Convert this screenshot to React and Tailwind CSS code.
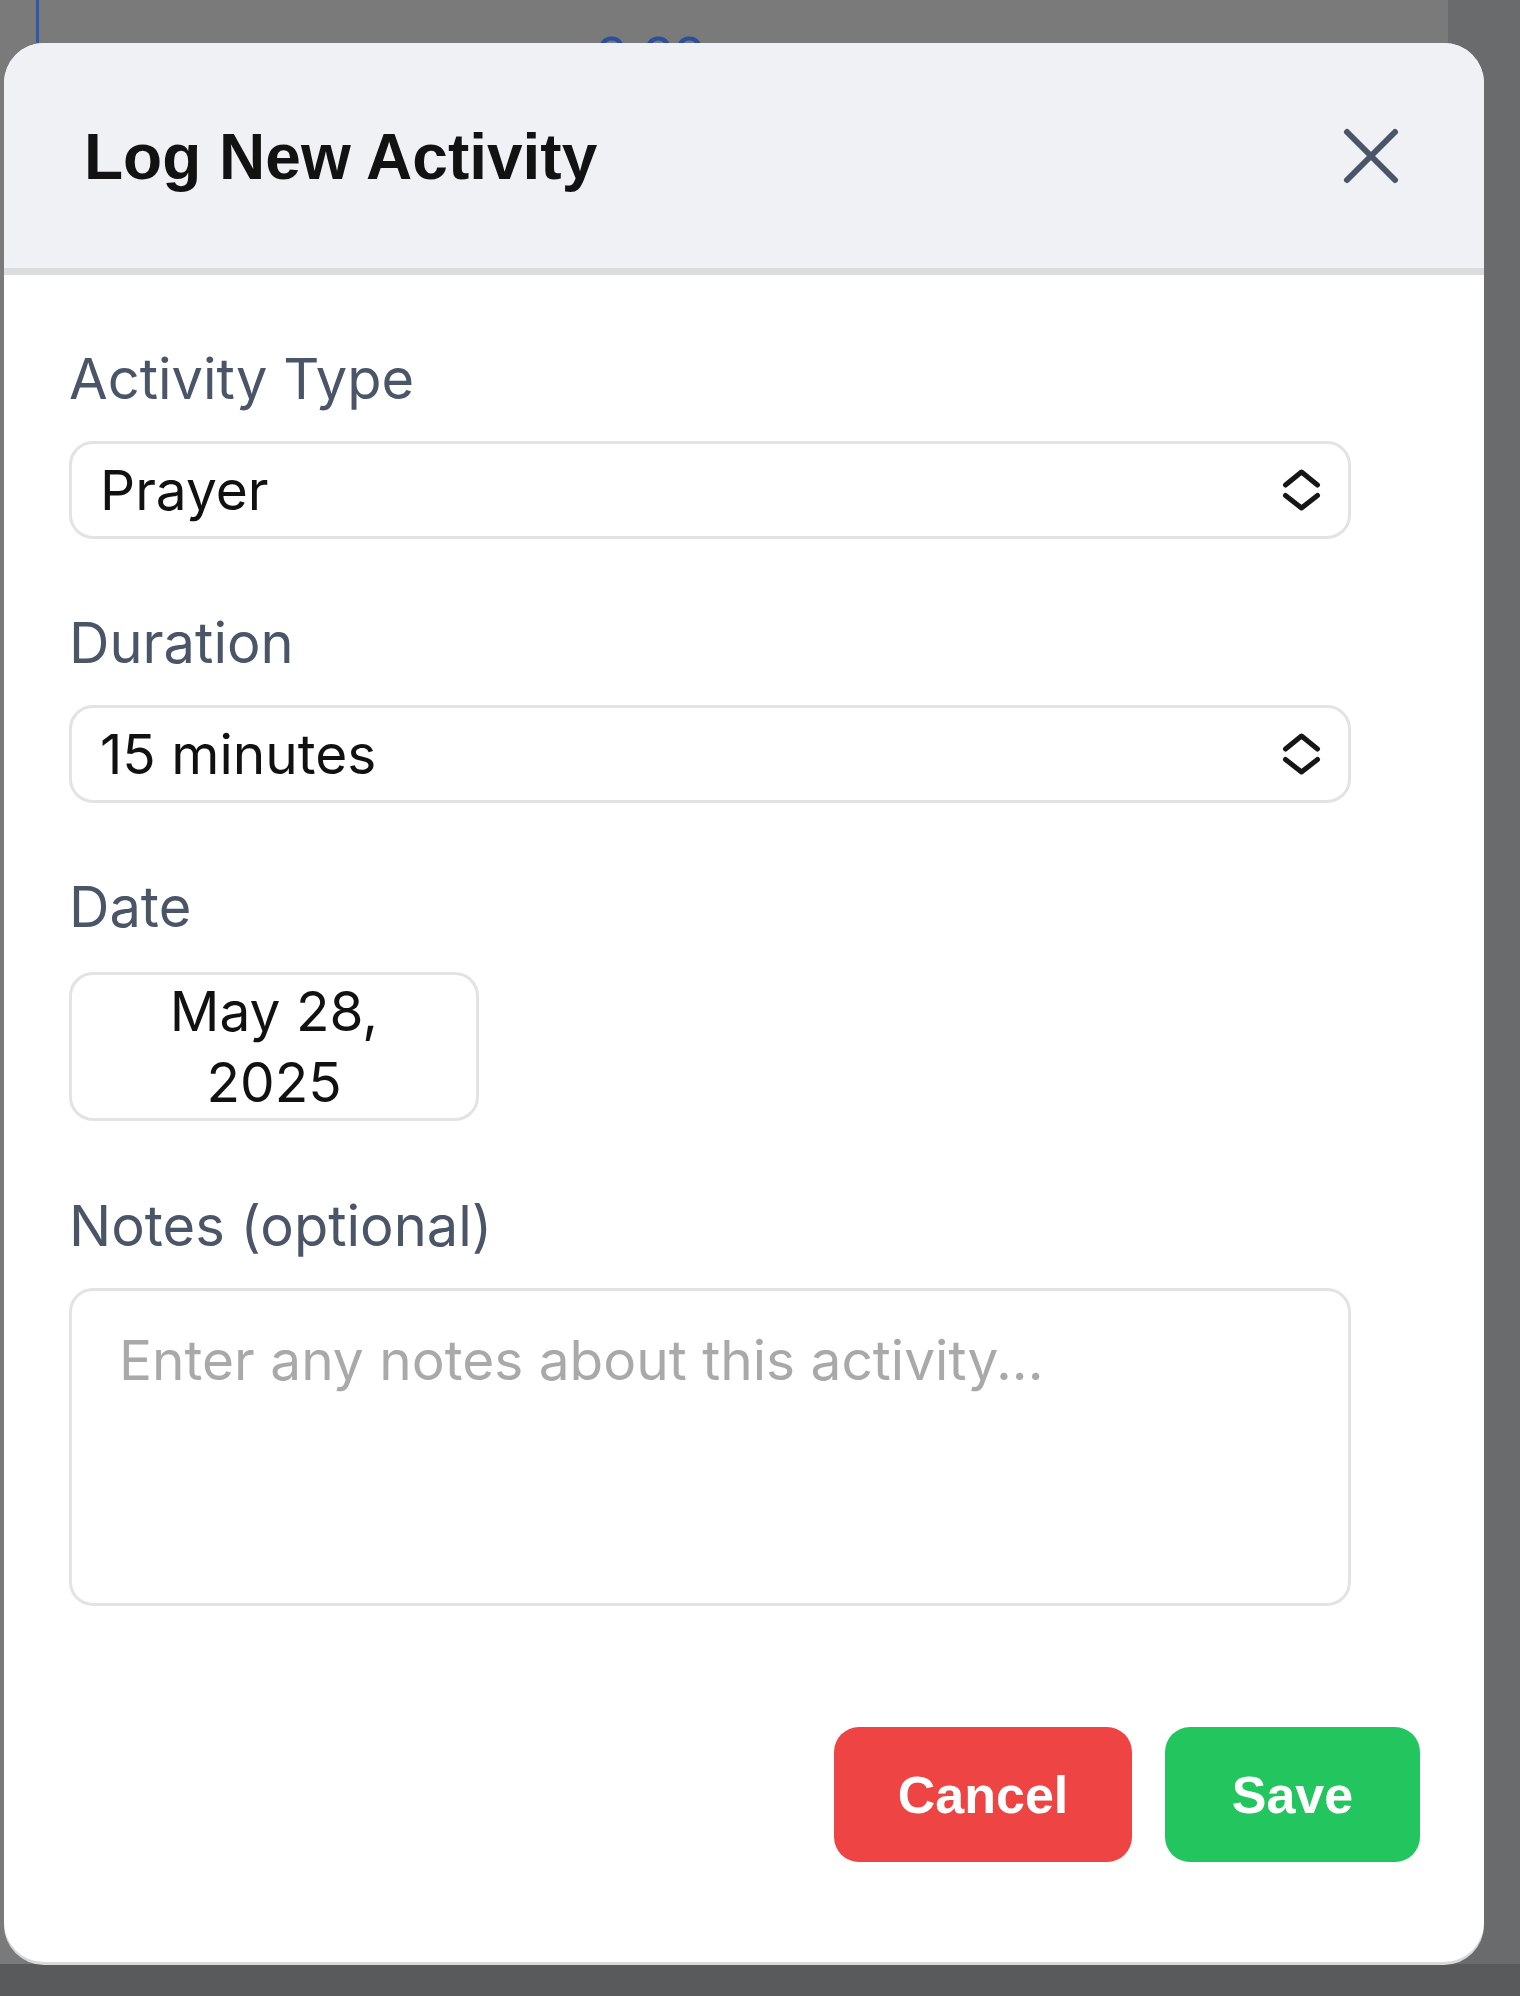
import React from "react";

// Icons
const CloseIcon = () => (
  <svg width="58" height="58" viewBox="0 0 58 58" fill="none">
    <path
      d="M5 5L53 53M53 5L5 53"
      stroke="#4a5568"
      strokeWidth="6"
      strokeLinecap="round"
    />
  </svg>
);

const ChevronsIcon = () => (
  <svg width="40" height="44" viewBox="0 0 40 44" fill="none">
    <path
      d="M4.5 17L20.5 4L36.5 17M4.5 27.5L20.5 40L36.5 27.5"
      stroke="#161616"
      strokeWidth="5"
      strokeLinecap="round"
      strokeLinejoin="round"
    />
  </svg>
);

const Label = ({ children, className = "" }) => (
  <p className={`text-[56px] leading-[64px] text-[#4a5568] ${className}`}>
    {children}
  </p>
);

const SelectBox = ({ value }) => (
  <div className="w-[1282px] h-[98px] border-[3px] border-[#e3e3e3] rounded-[24px] bg-white flex items-center justify-between pl-[28px] pr-[27px]">
    <span className="text-[55px] text-[#111111]">{value}</span>
    <ChevronsIcon />
  </div>
);

export default function App() {
  return (
    <div className="relative w-[1520px] h-[1996px] overflow-hidden bg-[#595a5b] pt-[43px] pl-[4px] font-['Inter',sans-serif]">
      {/* dimmed page behind the modal */}
      <div className="absolute left-0 top-0 w-[1448px] h-[1964px] bg-[#7a7a7a]" />
      <div className="absolute left-[1448px] top-0 right-0 h-[1964px] bg-[#6a6b6c]" />
      <div className="absolute left-[36px] top-0 w-[3px] h-[43px] bg-[#2c5aa6]" />
      <div className="absolute left-[596px] top-[28px] text-[56px] leading-none text-[#2a4f9c] font-['Liberation_Sans',Arial,sans-serif]">
        0.00
      </div>

      {/* modal */}
      <div className="relative w-[1480px] rounded-[40px] bg-white overflow-hidden shadow-[0_3px_0_#d9d9d9]">
        <div className="h-[232px] bg-[#eff1f5] border-b-[7px] border-[#dbdcde] flex items-center justify-between pl-[80px] pr-[84px]">
          <h2 className="text-[64px] font-bold text-[#121212] font-['Liberation_Sans',Arial,sans-serif] pt-[2px]">
            Log New Activity
          </h2>
          <CloseIcon />
        </div>

        <div className="pl-[65px] pr-[64px] pt-[72px] pb-[100px]">
          <Label className="mb-[30px]">Activity Type</Label>
          <SelectBox value="Prayer" />

          <Label className="mt-[72px] mb-[30px]">Duration</Label>
          <SelectBox value="15 minutes" />

          <Label className="mt-[72px] mb-[33px]">Date</Label>
          <div className="w-[410px] h-[149px] border-[3px] border-[#e3e3e3] rounded-[24px] flex flex-col items-center justify-center text-[55px] leading-[71px] text-[#111111]">
            <span>May 28,</span>
            <span>2025</span>
          </div>

          <Label className="mt-[73px] mb-[30px]">Notes (optional)</Label>
          <textarea
            className="block w-[1282px] h-[318px] border-[3px] border-[#e3e3e3] rounded-[24px] resize-none pl-[47px] pt-[29px] text-[55px] leading-[81px] text-[#111111] placeholder:text-[#a9a9a9] outline-none"
            placeholder="Enter any notes about this activity..."
          />

          <div className="mt-[121px] flex justify-end gap-[33px] font-['Liberation_Sans',Arial,sans-serif]">
            <button className="w-[298px] h-[135px] rounded-[25px] bg-[#ef4444] text-white text-[52px] font-bold">
              Cancel
            </button>
            <button className="w-[255px] h-[135px] rounded-[25px] bg-[#22c55e] text-white text-[52px] font-bold">
              Save
            </button>
          </div>
        </div>
      </div>
    </div>
  );
}
